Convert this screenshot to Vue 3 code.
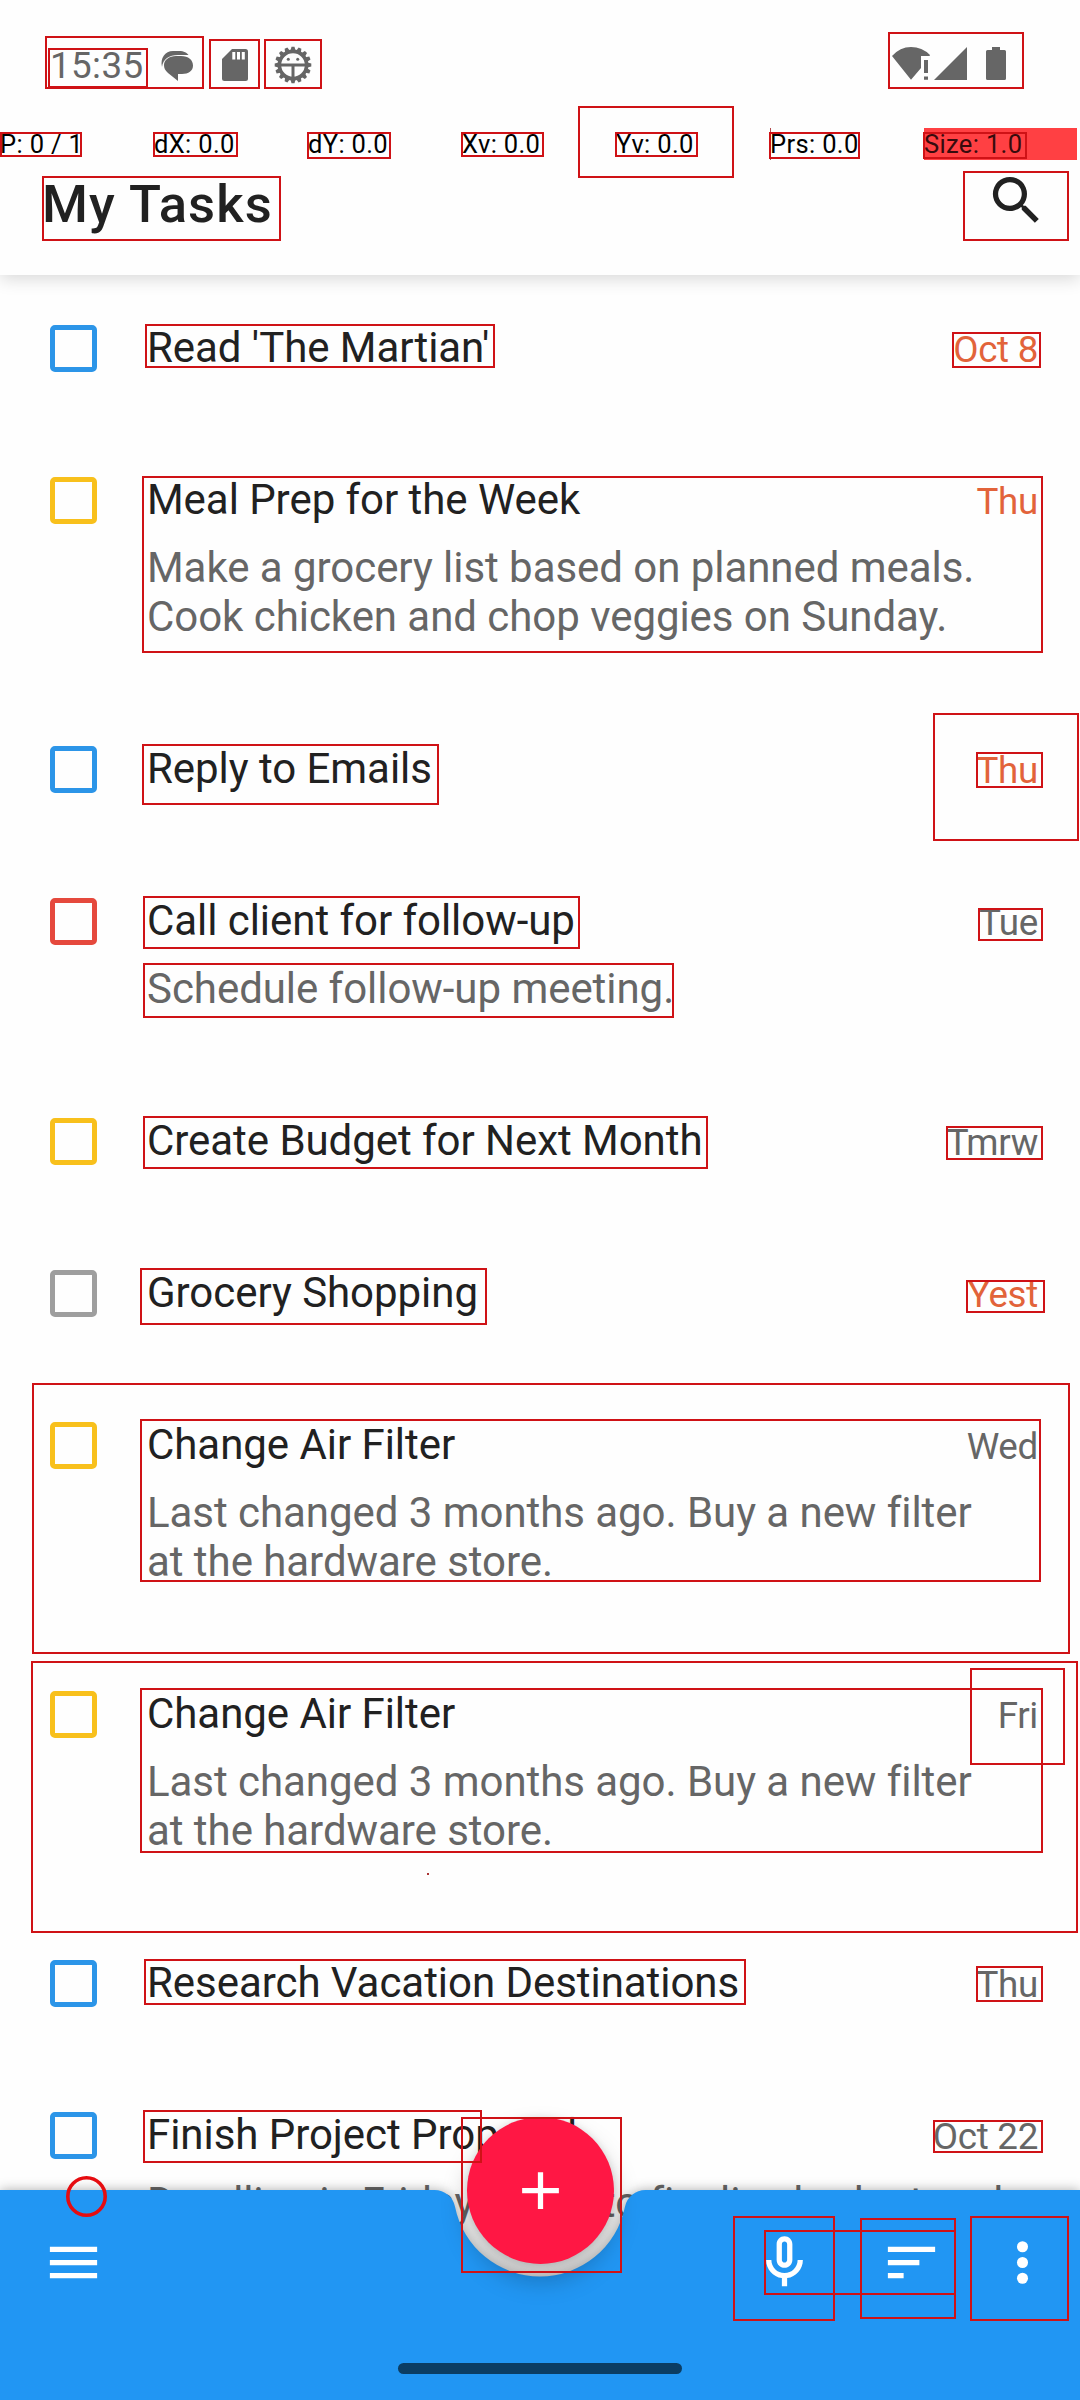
<script setup>
const metrics = ['P: 0 / 1', 'dX: 0.0', 'dY: 0.0', 'Xv: 0.0', 'Yv: 0.0', 'Prs: 0.0', 'Size: 1.0']

const tasks = [
  { title: "Read 'The Martian'", date: 'Oct 8', color: 'blue', late: true },
  {
    title: 'Meal Prep for the Week',
    notes: ['Make a grocery list based on planned meals.', 'Cook chicken and chop veggies on Sunday.'],
    date: 'Thu', color: 'yellow', late: true,
  },
  { title: 'Reply to Emails', date: 'Thu', color: 'blue', late: true },
  { title: 'Call client for follow-up', notes: ['Schedule follow-up meeting.'], date: 'Tue', color: 'red' },
  { title: 'Create Budget for Next Month', date: 'Tmrw', color: 'yellow' },
  { title: 'Grocery Shopping', date: 'Yest', color: 'gray', late: true },
  {
    title: 'Change Air Filter',
    notes: ['Last changed 3 months ago. Buy a new filter', 'at the hardware store.'],
    date: 'Wed', color: 'yellow',
  },
  {
    title: 'Change Air Filter',
    notes: ['Last changed 3 months ago. Buy a new filter', 'at the hardware store.'],
    date: 'Fri', color: 'yellow',
  },
  { title: 'Research Vacation Destinations', date: 'Thu', color: 'blue' },
  { title: 'Finish Project Proposal', notes: ['Deadline is Friday. Need to finalize budget and'], date: 'Oct 22', color: 'blue' },
]

// Bounding boxes of the detected elements: left, top, right, bottom
const bounds = [
  [45, 36, 204, 89], [48, 48, 148, 88], [209, 39, 260, 89], [264, 39, 322, 89],
  [888, 32, 1024, 89], [0, 132, 82, 157], [153, 132, 238, 157], [307, 132, 391, 159],
  [461, 132, 544, 157], [578, 106, 734, 178], [615, 132, 698, 157], [769, 132, 860, 159],
  [923, 132, 1027, 159], [42, 176, 281, 241], [963, 171, 1069, 241],
  [145, 324, 495, 368], [952, 332, 1041, 368], [142, 476, 1043, 653],
  [142, 744, 439, 805], [933, 713, 1079, 841], [976, 752, 1043, 788],
  [143, 896, 580, 949], [143, 963, 674, 1018], [978, 908, 1043, 941],
  [143, 1116, 708, 1169], [946, 1126, 1043, 1160], [140, 1268, 487, 1325], [966, 1280, 1045, 1313],
  [32, 1383, 1070, 1654], [140, 1419, 1041, 1582], [31, 1661, 1078, 1933], [140, 1688, 1043, 1853],
  [970, 1668, 1065, 1765], [144, 1959, 746, 2005], [976, 1966, 1043, 2002],
  [143, 2110, 482, 2163], [933, 2120, 1043, 2153], [461, 2117, 622, 2273],
  [733, 2216, 835, 2321], [764, 2230, 956, 2295], [860, 2218, 956, 2319], [970, 2216, 1069, 2321],
]

const teeth = Array.from({ length: 16 }, (_, i) => i * 22.5)
</script>

<template>
  <div class="screen">
    <header class="header">
      <div class="status">
        <span class="clock">15:35</span>
        <svg class="notifications" width="160" height="40" viewBox="156 45 160 40" fill="#666">
          <path d="M162 67C160 58 165 51 173 51H179C184 51 187 53 188.500 55H178C169 55 163 59 162 67Z" />
          <path d="M176 56H181C188.500 56 193 60 193 65.500S188.500 74 182 74H178V81L168 73C165 70.500 164 68 164 65C164 60 169 56 176 56Z" />
          <path d="M232 49H245.500Q248 49 248 51.500V78.500Q248 81 245.500 81H224.500Q222 81 222 78.500V59Z" />
          <path fill="#fff" d="M232.300 52h3v7.500h-3zM237 52h3v7.500h-3zM241.800 52h3v7.500h-3z" />
          <g transform="translate(293 65)">
            <circle r="13.600" fill="none" stroke="#666" stroke-width="3.600" />
            <path v-for="a in teeth" :key="a" :transform="`rotate(${a})`" d="M-2.500-14.500L-1.500-18.300H1.500L2.500-14.500Z" />
            <path d="M-13-1.500H13V1.500H1.500V13H-1.500V1.500H-13Z" />
            <circle cx="-4.700" cy="-5.700" r="1.500" /><circle cx="4.700" cy="-5.700" r="1.500" />
          </g>
        </svg>
        <svg class="signals" width="120" height="40" viewBox="890 45 120 40" fill="#666">
          <path d="M892 56Q900 47 911 47T930 55L929.500 56H921V68L911 79.700Z" />
          <path d="M924 60h4v13h-4zM924 76.500h4v3.300h-4zM934 80L967 47V80Z" />
          <path d="M992 47h8v3h4.500q1.500 0 1.500 1.500v27q0 1.500-1.500 1.500h-17q-1.500 0-1.500-1.500v-27q0-1.500 1.500-1.500h4.500z" />
        </svg>
      </div>
      <div class="metrics">
        <span v-for="(m, i) in metrics" :key="m" class="metric" :class="{ hot: i === 6, tick: i === 5 }">{{ m }}</span>
      </div>
      <div class="titlebar">
        <h1>My Tasks</h1>
        <svg class="search" width="63" height="63" viewBox="0 0 24 24" fill="#212121">
          <path d="M15.500 14h-.79l-.28-.27A6.471 6.471 0 0 0 16 9.500 6.500 6.500 0 1 0 9.500 16c1.610 0 3.090-.59 4.230-1.570l.27.28v.79l5 4.990L20.490 19l-4.990-5zm-6 0C7.010 14 5 11.990 5 9.500S7.010 5 9.500 5 14 7.010 14 9.500 11.990 14 9.500 14z" />
        </svg>
      </div>
    </header>

    <main class="list">
      <article v-for="(t, i) in tasks" :key="i" class="task">
        <span class="check" :class="t.color"></span>
        <div class="body">
          <div class="line">
            <span class="name">{{ t.title }}</span>
            <span class="date" :class="{ late: t.late }">{{ t.date }}</span>
          </div>
          <div v-if="t.notes" class="notes">
            <div v-for="n in t.notes" :key="n">{{ n }}</div>
          </div>
        </div>
      </article>
    </main>

    <footer class="bar">
      <svg class="shape" width="1080" height="240" viewBox="0 -30 1080 240">
        <path d="M-40 0H434.500A21 21 0 0 1 455.100 16.900A86.600 86.600 0 0 0 624.900 16.900A21 21 0 0 1 645.500 0H1120V240H-40Z" fill="#2196f3" />
      </svg>
      <div class="actions">
        <svg width="63" height="63" viewBox="0 0 24 24"><path d="M3 18h18v-2H3v2zm0-5h18v-2H3v2zm0-7v2h18V6H3z" /></svg>
        <svg class="mic" width="63" height="63" viewBox="0 0 24 24"><path d="M12 14c1.660 0 3-1.340 3-3V5c0-1.660-1.340-3-3-3S9 3.340 9 5v6c0 1.660 1.340 3 3 3zm-1-9c0-.55.45-1 1-1s1 .45 1 1v6c0 .55-.45 1-1 1s-1-.45-1-1V5zm6 6c0 2.760-2.240 5-5 5s-5-2.240-5-5H5c0 3.530 2.610 6.430 6 6.920V21h2v-3.080c3.390-.49 6-3.390 6-6.920h-2z" /></svg>
        <svg class="sort" width="63" height="63" viewBox="0 0 24 24"><path d="M3 18h6v-2H3v2zM3 6v2h18V6H3zm0 7h12v-2H3v2z" /></svg>
        <svg class="more" width="63" height="63" viewBox="0 0 24 24"><circle cx="12" cy="6" r="2.100" /><circle cx="12" cy="12" r="2.100" /><circle cx="12" cy="18" r="2.100" /></svg>
      </div>
      <div class="pill"></div>
      <div class="fab">
        <svg width="63" height="63" viewBox="0 0 24 24"><path d="M19 13h-6v6h-2v-6H5v-2h6V5h2v6h6v2z" /></svg>
      </div>
    </footer>

    <svg class="overlay" width="1080" height="2400" viewBox="0 0 1080 2400" fill="none" stroke="#cf1216" stroke-width="2">
      <rect v-for="(b, i) in bounds" :key="i" :x="b[0] + 1" :y="b[1] + 1" :width="b[2] - b[0] - 2" :height="b[3] - b[1] - 2" />
      <circle cx="86.500" cy="2196.500" r="18.700" stroke="#e60c10" stroke-width="3.600" />
      <rect x="427" y="1873" width="2" height="2" fill="#a33" stroke="none" />
    </svg>
  </div>
</template>

<style>
body { margin: 0; }
</style>

<style scoped>
.screen {
  position: relative;
  width: 1080px;
  height: 2400px;
  overflow: hidden;
  background: #fefefe;
  color: #212121;
  font-family: Roboto, "Liberation Sans", sans-serif;
}
.header {
  height: 275px;
  background: #fefefe;
  box-shadow: 0 4px 16px rgba(0, 0, 0, 0.15);
}
.status {
  display: flex;
  box-sizing: border-box;
  height: 128px;
  padding: 45px 70px 0 50px;
}
.clock {
  flex: none;
  width: 106px;
  font-size: 36.75px;
  line-height: 42px;
  letter-spacing: 0.4px;
  color: #666;
}
.signals { margin-left: auto; }
.metrics {
  display: flex;
  height: 32px;
  gap: 1px;
  font-size: 25.5px;
  line-height: 32px;
  letter-spacing: 0.35px;
  color: #000;
}
.metric {
  box-sizing: border-box;
  width: 153px;
  flex: none;
  white-space: nowrap;
}
.hot { background: #ff4043; color: #370b0d; }
.tick { box-shadow: inset 1px 0 #b44a4d; }
.titlebar {
  display: flex;
  justify-content: space-between;
  padding: 9px 32px 0 42px;
}
h1 {
  margin: 4px 0 0;
  font-size: 52.5px;
  line-height: 62px;
  font-weight: 500;
  letter-spacing: 1.15px;
}
.list { padding-top: 48px; }
.task {
  display: flex;
  align-items: flex-start;
  padding: 0 42px 103px 50px;
}
.check {
  flex: none;
  box-sizing: border-box;
  width: 47px;
  height: 47px;
  margin: 2px 50px 0 0;
  border: 5px solid;
  border-radius: 5px;
}
.blue { color: #2c95e8; }
.yellow { color: #f8c01c; }
.red { color: #e5493d; }
.gray { color: #9e9e9e; }
.body {
  flex: 1;
  font-size: 42px;
  line-height: 49px;
  letter-spacing: -0.05px;
  white-space: nowrap;
}
.line {
  display: flex;
  justify-content: space-between;
  align-items: baseline;
  height: 49px;
}
.date { font-size: 36.75px; letter-spacing: -0.3px; color: #666; }
.date.late { color: #e2633a; }
.notes { margin-top: 19px; color: #666; }
.bar {
  position: absolute;
  left: 0;
  bottom: 0;
  width: 1080px;
  height: 210px;
}
.shape {
  position: absolute;
  left: 0;
  top: -30px;
  filter: drop-shadow(0 0 6px rgba(0, 0, 0, 0.32));
}
.actions {
  position: relative;
  display: flex;
  box-sizing: border-box;
  padding: 41px 26px 0 42px;
  fill: #fff;
}
.mic { margin-left: auto; }
.sort { margin-left: 64px; }
.more { margin-left: 48px; }
.pill {
  position: absolute;
  left: 398px;
  top: 173px;
  width: 284px;
  height: 11px;
  border-radius: 6px;
  background: #0b3d63;
}
.fab {
  position: absolute;
  left: 467px;
  top: -73px;
  display: flex;
  align-items: center;
  justify-content: center;
  width: 147px;
  height: 147px;
  border-radius: 50%;
  background: #ff1744;
  fill: #fff;
  box-shadow: 0 15px 26px rgba(0, 0, 0, 0.26), 0 0 7px rgba(0, 0, 0, 0.1);
}
.overlay {
  position: absolute;
  left: 0;
  top: 0;
}
</style>
